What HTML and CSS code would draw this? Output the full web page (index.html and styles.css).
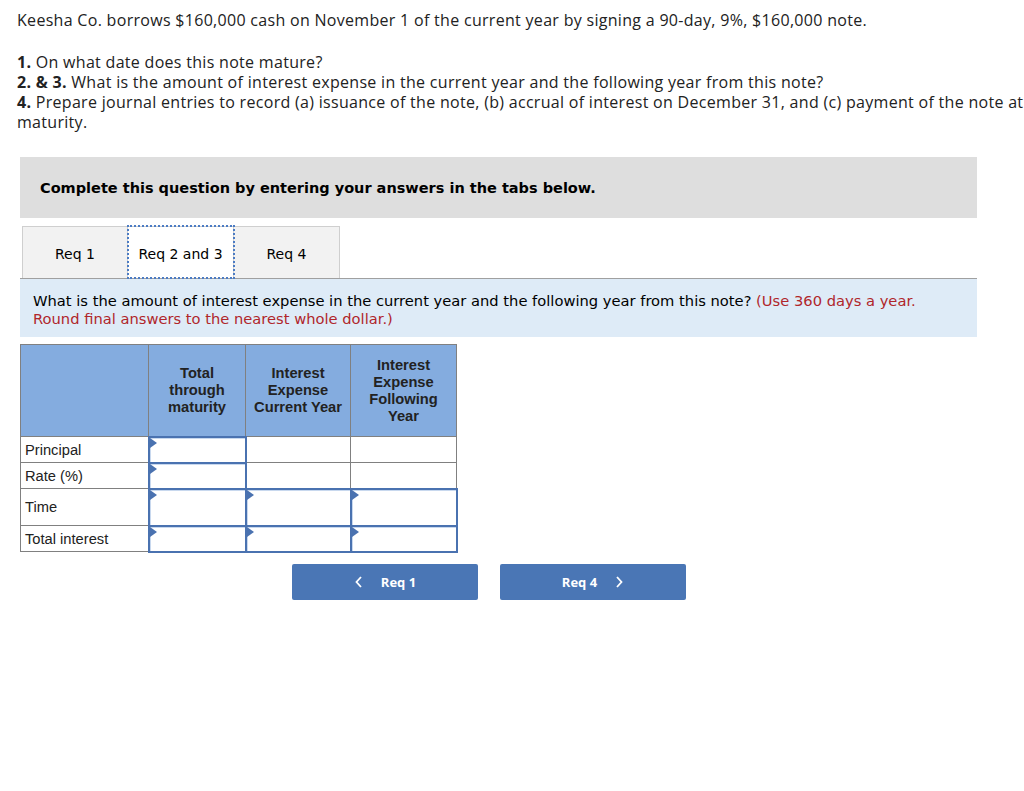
FILE: index.html
```html
<!DOCTYPE html>
<html lang="en">
<head>
    <meta charset="UTF-8">
    <meta name="viewport" content="width=device-width, initial-scale=1.0">
    <title>Keesha Co. note</title>
    <link rel="stylesheet" href="styles.css">
</head>
<body>
    <div class="intro">
        <p>Keesha Co. borrows $160,000 cash on November 1 of the current year by signing a 90-day, 9%, $160,000 note.</p>
        <p>
            <b>1.</b> On what date does this note mature?<br>
            <b>2. &amp; 3.</b> What is the amount of interest expense in the current year and the following year from this note?<br>
            <b>4.</b> Prepare journal entries to record (a) issuance of the note, (b) accrual of interest on December 31, and (c) payment of the note at maturity.
        </p>
    </div>

    <section class="question">
        <div class="instructions">Complete this question by entering your answers in the tabs below.</div>

        <div class="tabs">
            <div class="tab">Req 1</div>
            <div class="tab tab-active">Req 2 and 3</div>
            <div class="tab">Req 4</div>
        </div>

        <div class="prompt">
            What is the amount of interest expense in the current year and the following year from this note?
            <span class="hint">(Use 360 days a year. Round final answers to the nearest whole dollar.)</span>
        </div>

        <table class="grid">
            <thead>
                <tr>
                    <th class="col-label"></th>
                    <th class="col-a">Total<br>through<br>maturity</th>
                    <th class="col-b">Interest<br>Expense<br>Current Year</th>
                    <th class="col-c">Interest<br>Expense<br>Following<br>Year</th>
                </tr>
            </thead>
            <tbody>
                <tr class="row-short">
                    <td>Principal</td>
                    <td class="input"><span></span></td>
                    <td></td>
                    <td></td>
                </tr>
                <tr class="row-short">
                    <td>Rate (%)</td>
                    <td class="input"><span></span></td>
                    <td></td>
                    <td></td>
                </tr>
                <tr class="row-tall">
                    <td>Time</td>
                    <td class="input"><span></span></td>
                    <td class="input"><span></span></td>
                    <td class="input"><span></span></td>
                </tr>
                <tr class="row-short">
                    <td>Total interest</td>
                    <td class="input"><span></span></td>
                    <td class="input"><span></span></td>
                    <td class="input"><span></span></td>
                </tr>
            </tbody>
        </table>

        <div class="nav">
            <button class="nav-btn">
                <svg width="10" height="14" viewBox="0 0 10 14"><path d="M7 2 L2.5 7 L7 12" fill="none" stroke="#fff" stroke-width="1.8"/></svg>
                <span>Req 1</span>
            </button>
            <button class="nav-btn">
                <span>Req 4</span>
                <svg width="10" height="14" viewBox="0 0 10 14"><path d="M3 2 L7.5 7 L3 12" fill="none" stroke="#fff" stroke-width="1.8"/></svg>
            </button>
        </div>
    </section>
</body>
</html>
```

FILE: styles.css
```css
html{
    box-sizing: border-box;
    overflow-x: hidden;
}

*,
*:after,
*:before{
    box-sizing: inherit;
}

body{
    margin: 0;
    background-color: #fff;
    color: #222;
    font-family: 'Open Sans', sans-serif;
    font-size: 16px;
}

.intro{
    width: 1040px;
    padding: 10px 0 0 17px;
    letter-spacing: 0.3px;
}

.intro p{
    margin: 0 0 22px;
    line-height: 20px;
}

.intro p:last-child{
    margin-bottom: 0;
}

.intro b{
    font-weight: 700;
}

.question{
    width: 957px;
    margin: 25px 0 0 20px;
    font-family: 'DejaVu Sans', Verdana, sans-serif;
    font-size: 14px;
    color: #000;
}

.instructions{
    background-color: #dedede;
    height: 61px;
    padding: 0 20px;
    display: flex;
    align-items: center;
    font-weight: bold;
    font-size: 14.5px;
}

.tabs{
    display: flex;
    margin: 8px 0 0 2px;
}

.tab{
    width: 106px;
    height: 52px;
    padding-top: 2px;
    display: flex;
    align-items: center;
    justify-content: center;
    background-color: #f2f2f2;
    border: 1px solid #cfcfcf;
    border-bottom: none;
}

.tab + .tab{
    border-left: none;
}

.tab-active{
    background-color: #fff;
    outline: 2px dotted #4c7cc4;
    outline-offset: -1px;
    position: relative;
}

.prompt{
    background-color: #deebf7;
    border-top: 1px solid #a0a0a0;
    padding: 13px 13px 9px;
    line-height: 18px;
    font-size: 14.7px;
}

.hint{
    color: #b0262b;
}

.grid{
    margin-top: 7px;
    border-collapse: collapse;
    font-family: 'Liberation Sans', Arial, sans-serif;
    font-size: 14.7px;
    color: #222;
}

.grid th,
.grid td{
    border: 1px solid #808080;
    padding: 0;
}

.grid th{
    background-color: #84acdf;
    height: 92px;
    font-weight: bold;
    line-height: 17px;
    text-align: center;
}

.col-label{ width: 128px; }
.col-a{ width: 97px; }
.col-b{ width: 105px; }
.col-c{ width: 106px; }

.grid td{
    padding: 0 4px;
    vertical-align: middle;
}

.row-short td{ height: 26px; }
.row-tall td{ height: 37px; }

.grid td.input{
    padding: 0;
    position: relative;
    border: 2px solid #4a72b0;
    box-shadow: inset 1px 1px 0 #c8d8ee;
}

.grid td.input span{
    position: absolute;
    top: 0;
    left: 0;
    width: 0;
    height: 0;
    border-top: 5px solid transparent;
    border-bottom: 5px solid transparent;
    border-left: 7px solid #4a72b0;
}

.nav{
    display: flex;
    gap: 22px;
    padding-left: 272px;
    margin-top: 11px;
}

.nav-btn{
    width: 186px;
    height: 36px;
    border: none;
    border-radius: 2px;
    background-color: #4a76b5;
    color: #fff;
    font-family: 'Open Sans', sans-serif;
    font-weight: 700;
    font-size: 13px;
    display: flex;
    align-items: center;
    justify-content: center;
    gap: 17px;
}
```
